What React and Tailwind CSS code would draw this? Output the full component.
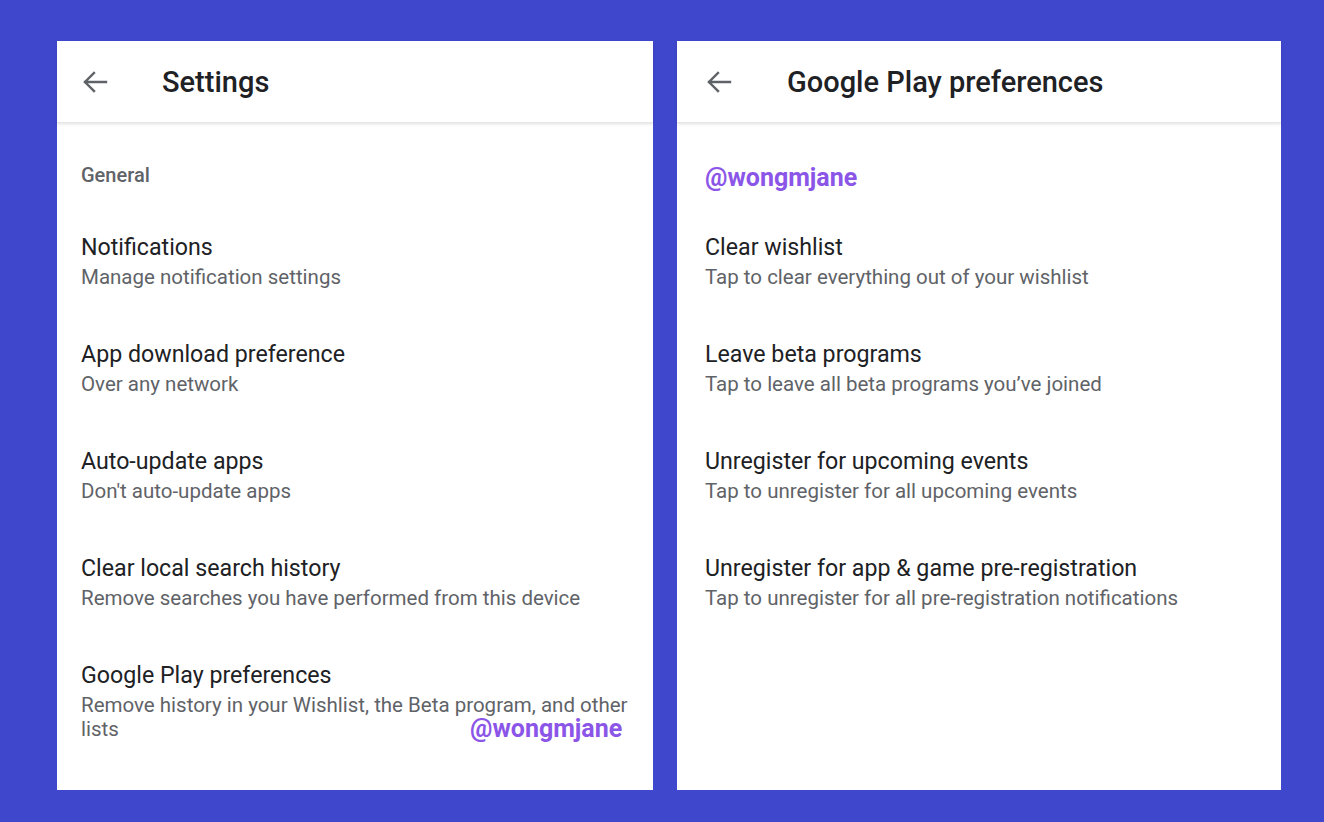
import React from "react";

const Arrow = () => (
  <svg width="26" height="22" viewBox="0 0 26 22" fill="none" className="text-[#5f6368]">
    <path d="M24 11H3M12 2L3 11l9 9" stroke="currentColor" strokeWidth="2.4" strokeLinecap="square" />
  </svg>
);

const Item = ({ title, sub }) => (
  <div className="flex flex-col h-[107px]">
    <div className="text-[23.2px] leading-[30px] text-[#202124]">{title}</div>
    <div className="text-[20.5px] leading-[24px] text-[#5f6368] mt-[3px]">{sub}</div>
  </div>
);

const Header = ({ title, right }) => (
  <div className="h-[82px] flex items-center shadow-[0_1px_3px_rgba(0,0,0,0.12)] border-b border-[#e6e6e6]">
    <div className={right ? "w-[110px] pl-[29px] flex items-center" : "w-[105px] pl-[25px] flex items-center"}>
      <Arrow />
    </div>
    <div className="text-[29px] font-medium text-[#202124] pt-[3px]">{title}</div>
  </div>
);

export default function App() {
  return (
    <div
      className="w-[1324px] h-[822px] bg-[#3f48cc] flex gap-[24px] pl-[57px] pt-[41px]"
      style={{ fontFamily: "Roboto, 'Liberation Sans', sans-serif" }}
    >
      <div className="w-[596px] h-[749px] bg-white flex flex-col relative">
        <Header title="Settings" />
        <div className="pl-[24px] pr-[20px]">
          <div className="text-[20px] font-medium text-[#5f6368] mt-[40px] h-[69px] leading-[24px]">General</div>
          <Item title="Notifications" sub="Manage notification settings" />
          <Item title="App download preference" sub="Over any network" />
          <Item title="Auto-update apps" sub="Don't auto-update apps" />
          <Item title="Clear local search history" sub="Remove searches you have performed from this device" />
          <div className="flex flex-col">
            <div className="text-[23.2px] leading-[30px] text-[#202124]">Google Play preferences</div>
            <div className="text-[20.5px] leading-[24px] text-[#5f6368] mt-[3px]">
              <span>Remove history in your Wishlist, the Beta program, and other lists</span>
            </div>
          </div>
        </div>
        <div className="absolute left-[413px] top-[673px] text-[25px] leading-[30px] font-bold text-[#8b55e8]">@wongmjane</div>
      </div>
      <div className="w-[604px] h-[749px] bg-white flex flex-col">
        <Header title="Google Play preferences" right />
        <div className="pl-[28px] pr-[20px]">
          <div className="text-[25px] font-bold text-[#8b55e8] mt-[40px] h-[69px] leading-[30px]">@wongmjane</div>
          <Item title="Clear wishlist" sub="Tap to clear everything out of your wishlist" />
          <Item title="Leave beta programs" sub="Tap to leave all beta programs you’ve joined" />
          <Item title="Unregister for upcoming events" sub="Tap to unregister for all upcoming events" />
          <Item title="Unregister for app & game pre-registration" sub="Tap to unregister for all pre-registration notifications" />
        </div>
      </div>
    </div>
  );
}
